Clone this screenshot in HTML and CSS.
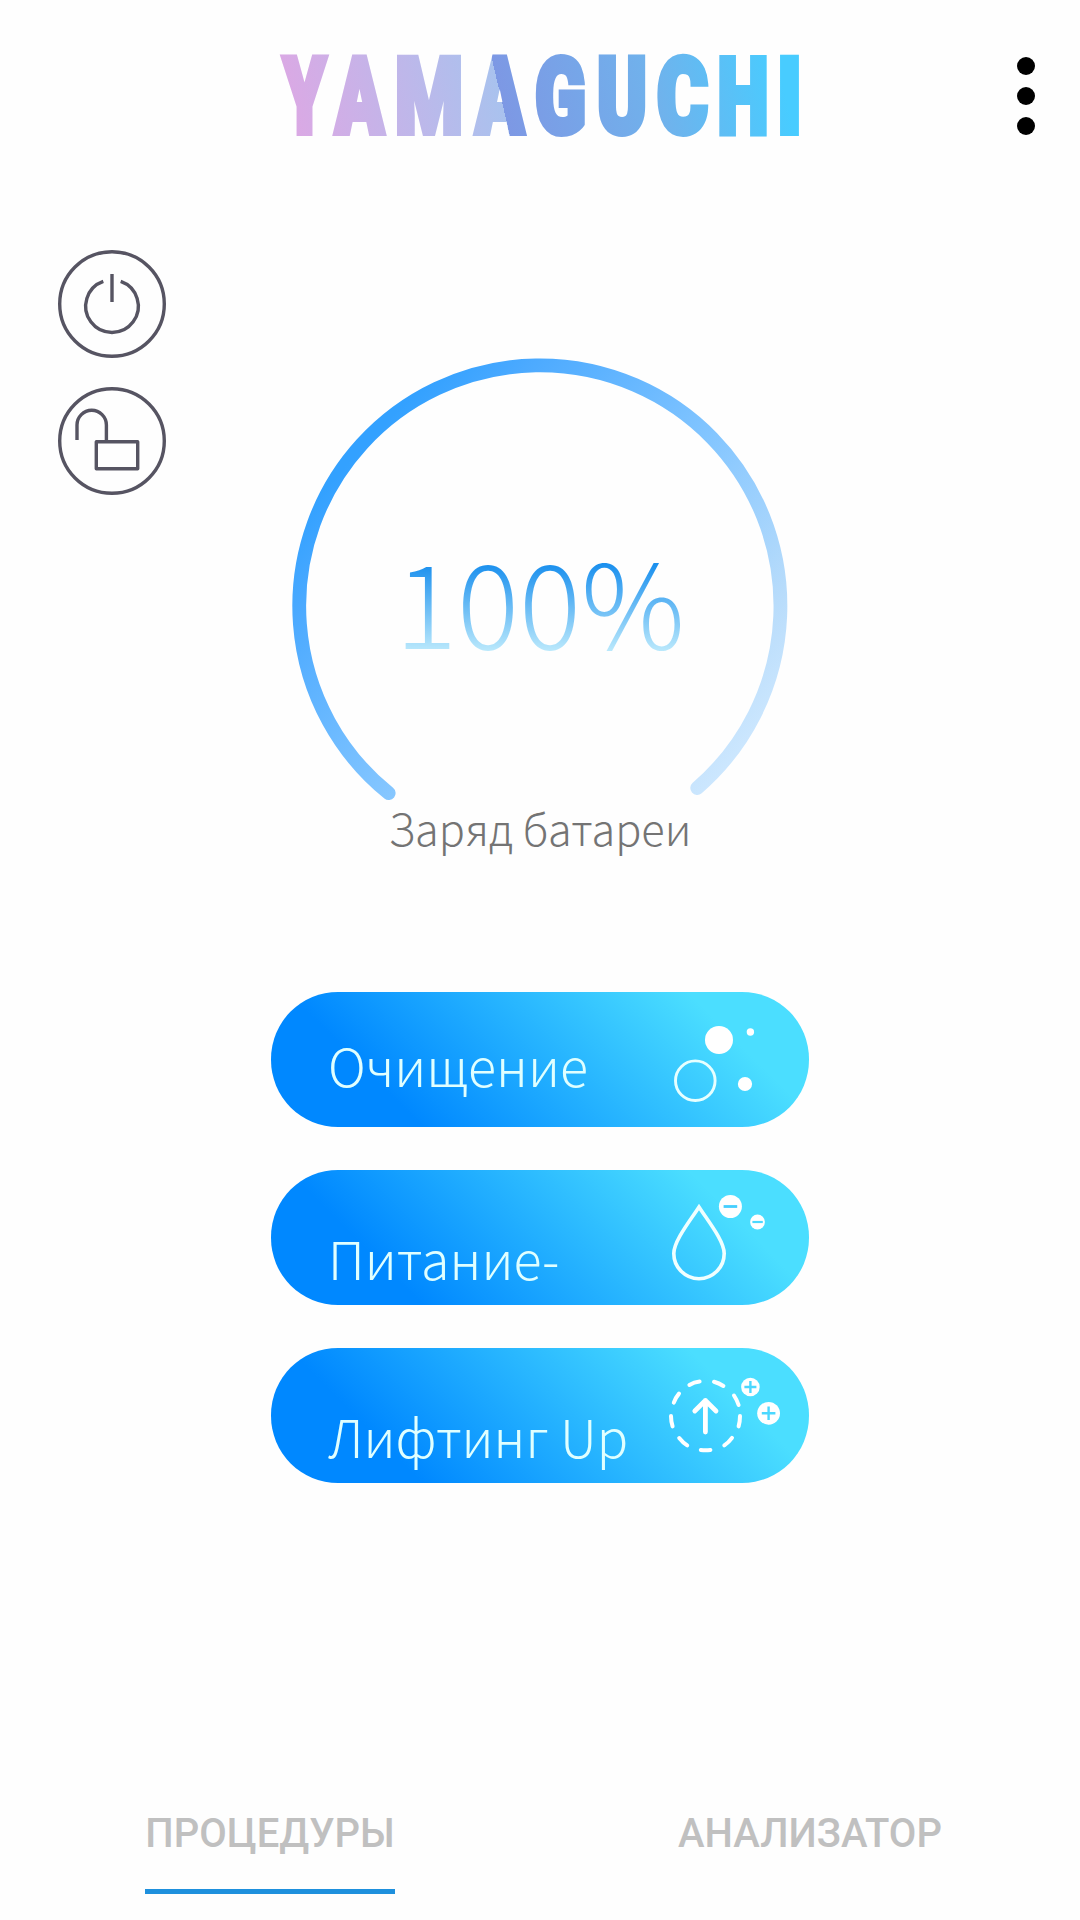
FILE: index.html
```
<!DOCTYPE html>
<html lang="ru">
<head>
    <meta charset="UTF-8">
    <meta name="viewport" content="width=device-width, initial-scale=1.0">
    <title>YAMAGUCHI</title>
    <link rel="stylesheet" href="styles.css">
</head>
<body>
    <div class="app">
        <header class="header">
            <svg class="logo" viewBox="270 46 540 100" role="img" aria-label="YAMAGUCHI">
                <defs>
                    <linearGradient id="logoGradient" gradientUnits="userSpaceOnUse" x1="280" y1="96" x2="790" y2="-23.6">
                        <stop offset="0" stop-color="#dca8e4"/>
                        <stop offset="0.41" stop-color="#a9c2ee"/>
                        <stop offset="0.41" stop-color="#7d98e4"/>
                        <stop offset="0.7" stop-color="#70b2ec"/>
                        <stop offset="0.94" stop-color="#48ccff"/>
                    </linearGradient>
                </defs>
                <text class="logo-text" y="132.8" fill="url(#logoGradient)" stroke="url(#logoGradient)"><tspan x="283" textLength="43" lengthAdjust="spacingAndGlyphs">Y</tspan><tspan x="335.2" textLength="48.5" lengthAdjust="spacingAndGlyphs">A</tspan><tspan x="395" textLength="68" lengthAdjust="spacingAndGlyphs">M</tspan><tspan x="475.4" textLength="48.5" lengthAdjust="spacingAndGlyphs">A</tspan><tspan x="535" textLength="51" lengthAdjust="spacingAndGlyphs">G</tspan><tspan x="597" textLength="50" lengthAdjust="spacingAndGlyphs">U</tspan><tspan x="657" textLength="51" lengthAdjust="spacingAndGlyphs">C</tspan><tspan x="717.5" textLength="51" lengthAdjust="spacingAndGlyphs">H</tspan><tspan x="777" textLength="25" lengthAdjust="spacingAndGlyphs">I</tspan></text>
            </svg>
            <button class="menu-btn" aria-label="Меню">
                <span class="dot"></span>
                <span class="dot"></span>
                <span class="dot"></span>
            </button>
        </header>

        <main class="main">
            <!-- Power and lock -->
            <div class="side-buttons">
                <button class="round-btn" aria-label="Питание">
                    <svg viewBox="0 0 108 108">
                        <circle cx="54" cy="54" r="52.3"/>
                        <path d="M45.3 31.4A26.3 26.3 0 1 0 62.7 31.4M54 24v28"/>
                    </svg>
                </button>
                <button class="round-btn" aria-label="Блокировка">
                    <svg viewBox="0 0 108 108">
                        <circle cx="54" cy="54" r="52.3"/>
                        <path d="M19 53V38a14.7 14.7 0 0 1 29.4 0V54"/>
                        <rect x="38.3" y="54.7" width="41.4" height="27" stroke-linejoin="round"/>
                    </svg>
                </button>
            </div>

            <!-- Battery charge -->
            <div class="battery">
                <div class="gauge">
                    <svg class="gauge-ring" viewBox="292 357 496 446">
                        <defs>
                            <linearGradient id="ringGradient" gradientUnits="userSpaceOnUse" x1="365" y1="445" x2="740" y2="790">
                                <stop offset="0" stop-color="#33a1ff"/>
                                <stop offset="0.13" stop-color="#4caaff"/>
                                <stop offset="0.48" stop-color="#82c5ff"/>
                                <stop offset="0.8" stop-color="#b8dcfb"/>
                                <stop offset="1" stop-color="#d2eaff"/>
                            </linearGradient>
                        </defs>
                        <path d="M388.7 793.2A240.6 240.6 0 1 1 697.2 788" fill="none" stroke="url(#ringGradient)" stroke-width="13.8" stroke-linecap="round"/>
                    </svg>
                    <div class="gauge-value">100%</div>
                </div>
                <div class="battery-label">Заряд батареи</div>
            </div>
        </main>

        <!-- Procedures -->
        <div class="procedures">
            <button class="procedure">
                <span>Очищение</span>
                <svg viewBox="660 992 130 135">
                    <circle cx="719" cy="1040" r="14" fill="#fff"/>
                    <circle cx="750.4" cy="1032" r="3.7" fill="#fff"/>
                    <circle cx="745" cy="1084" r="7.1" fill="#fff"/>
                    <circle cx="695.3" cy="1080.7" r="19.8" fill="none" stroke="#e6ffff" stroke-width="2.9"/>
                </svg>
            </button>
            <button class="procedure low">
                <span>Питание-</span>
                <svg viewBox="660 1170 130 135">
                    <path d="M699 1207C690 1221 673.8 1241 673.8 1253.5A25.2 25.2 0 0 0 724.2 1253.5C724.2 1241 708 1221 699 1207Z" fill="none" stroke="#f0ffff" stroke-width="3.6"/>
                    <circle cx="730.4" cy="1206.5" r="11.5" fill="#fff"/>
                    <circle cx="757.5" cy="1222" r="7.4" fill="#fff"/>
                    <path d="M723.6 1206.5h13.6" stroke="#45cfff" stroke-width="2.8"/>
                    <path d="M752.4 1222h10.4" stroke="#4bd8ff" stroke-width="2.2"/>
                </svg>
            </button>
            <button class="procedure low">
                <span>Лифтинг Up</span>
                <svg viewBox="660 1348 130 135">
                    <g fill="none" stroke="#fff" stroke-width="4" stroke-linecap="round" stroke-linejoin="round">
                        <path d="M689.4 1385Q694 1382.3 699.6 1381.6M714 1381.8Q719 1383.2 723.4 1386M734 1395.5Q737 1400 738.6 1405M740 1416Q740 1421.5 738.6 1426.4M732 1437.8Q728.7 1442.4 724.3 1445.4M700.8 1450Q705.4 1450.6 710.4 1450M687.2 1445.4Q682.6 1442.4 679.2 1438M672.6 1426.4Q671 1421.5 671 1416M673.8 1402.6Q675.6 1397.6 679 1393.6"/>
                        <path d="M705.4 1400.5V1432M694.8 1411L705.4 1400.5L716 1411" stroke-width="4.8"/>
                    </g>
                    <circle cx="750.4" cy="1387" r="9.3" fill="#fff"/>
                    <circle cx="768.6" cy="1413.3" r="11.4" fill="#fff"/>
                    <path d="M744.4 1387h12M750.4 1381v12M761.8 1413.3h13.6M768.6 1406.5v13.6" stroke="#4bd8ff" stroke-width="2.4"/>
                </svg>
            </button>
        </div>

        <nav class="tabs">
            <a class="tab active">ПРОЦЕДУРЫ</a>
            <a class="tab">АНАЛИЗАТОР</a>
        </nav>
    </div>
</body>
</html>
```
FILE: styles.css
```
* {
    margin: 0;
    padding: 0;
    box-sizing: border-box;
}

body {
    font-family: "Noto Sans CJK SC", "Noto Sans", sans-serif;
    font-weight: 300;
    background: #fefefe;
    height: 100vh;
    overflow: hidden;
}

button {
    border: none;
    background: none;
    font: inherit;
    cursor: pointer;
}

.app {
    width: 1080px;
    height: 1920px;
    display: flex;
    flex-direction: column;
}

.header {
    display: grid;
    grid-template-columns: 270px 540px 270px;
    height: 250px;
    padding-top: 46px;
    align-items: start;
}

.logo {
    grid-column: 2;
    width: 540px;
    height: 100px;
    overflow: visible;
}

.logo-text {
    font-family: Roboto, sans-serif;
    font-size: 105px;
    font-weight: 900;
    stroke-width: 6px;
}

.menu-btn {
    display: flex;
    flex-direction: column;
    gap: 12px;
    justify-self: end;
    padding: 11px 45px 0 0;
}

.dot {
    width: 18px;
    height: 18px;
    border-radius: 50%;
    background: #000;
}

.main {
    display: grid;
    grid-template-columns: 292px 496px 292px;
    height: 742px;
}

.side-buttons {
    display: flex;
    flex-direction: column;
    gap: 29px;
    padding-left: 58px;
}

.round-btn,
.round-btn svg {
    display: block;
    width: 108px;
    height: 108px;
}

.round-btn svg {
    fill: none;
    stroke: #565462;
    stroke-width: 3.4;
}

.battery {
    padding-top: 107px;
    text-align: center;
}

.gauge {
    display: grid;
    height: 446px;
}

.gauge-ring,
.gauge-value {
    grid-area: 1 / 1;
}

.gauge-ring {
    width: 496px;
    height: 446px;
}

.gauge-value {
    align-self: start;
    justify-self: center;
    margin-top: 161px;
    font-size: 116px;
    line-height: 160px;
    background: linear-gradient(#1b90ee 29%, #bdeafc 84%);
    -webkit-background-clip: text;
    background-clip: text;
    color: transparent;
}

.battery-label {
    font-size: 43.3px;
    line-height: 49px;
    color: #747474;
}

.procedures {
    display: flex;
    flex-direction: column;
    align-items: center;
    gap: 43px;
}

.procedure {
    display: flex;
    justify-content: space-between;
    width: 538px;
    height: 135px;
    padding: 0 19px 0 57px;
    border-radius: 67px;
    background: linear-gradient(45deg, #0088ff 22.5%, #4bdeff 82%);
    color: #e0ffff;
    font-size: 52px;
    line-height: 60px;
    white-space: nowrap;
}

.procedure span {
    padding-top: 43px;
}

.procedure.low span {
    padding-top: 58px;
}

.procedure svg {
    flex: none;
    width: 130px;
    height: 135px;
}

.tabs {
    display: grid;
    grid-template-columns: 1fr 1fr;
    justify-items: center;
    margin-top: auto;
    padding-bottom: 26px;
    font-family: Roboto, sans-serif;
    font-size: 40px;
    font-weight: 500;
    color: #c0c0c0;
}

.tab {
    height: 86px;
    line-height: 52px;
    border-bottom: 5px solid transparent;
}

.tab.active {
    border-bottom-color: #1e90dd;
}
```
